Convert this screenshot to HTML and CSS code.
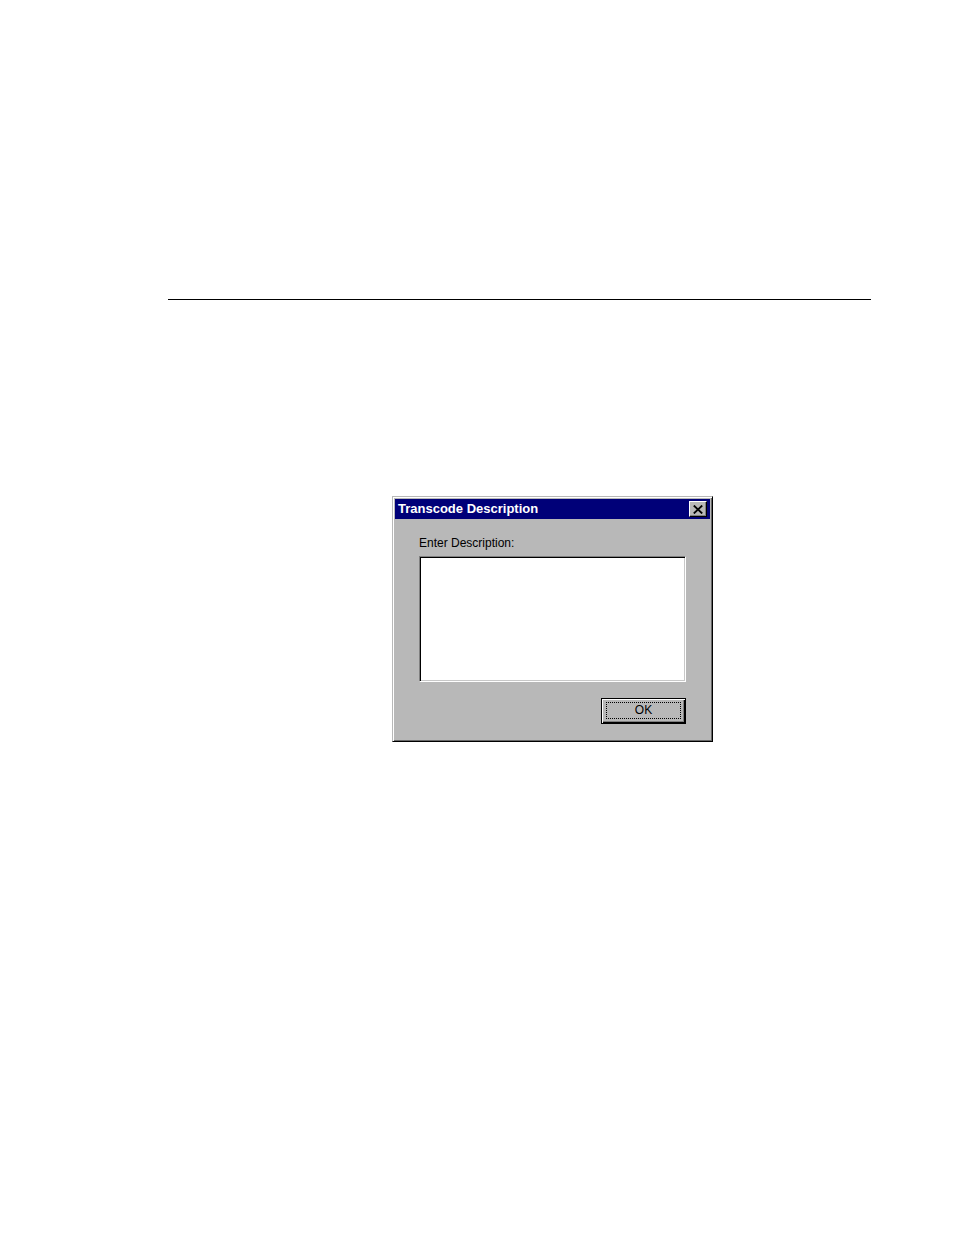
FILE: index.html
```
<!DOCTYPE html>
<html lang="en">
<head>
    <meta charset="UTF-8">
    <meta name="viewport" content="width=device-width, initial-scale=1.0">
    <title>Transcode Description</title>
    <link rel="stylesheet" href="styles.css">
</head>
<body>
    <main class="page">
        <hr class="rule">

        <form class="dialog">
            <div class="title-bar">
                <h1>Transcode Description</h1>
                <button type="button" class="close" aria-label="Close">
                    <svg width="10" height="9" viewBox="0 0 10 9" aria-hidden="true">
                        <path d="M0.8 0.5 L9.2 8.5 M9.2 0.5 L0.8 8.5" stroke="#000" stroke-width="1.8" fill="none"/>
                    </svg>
                </button>
            </div>

            <div class="dialog-body">
                <label for="description">Enter Description:</label>
                <textarea id="description" name="description"></textarea>
                <button type="submit" class="ok"><span>OK</span></button>
            </div>
        </form>
    </main>
</body>
</html>
```
FILE: styles.css
```
* {
    box-sizing: border-box;
}

body {
    margin: 0;
    background: #ffffff;
    font-family: "Liberation Sans", Arial, sans-serif;
    font-size: 12px;
    color: #000000;
}

.page {
    padding: 299px 83px 40px 168px;
}

.rule {
    margin: 0;
    border: 0;
    border-top: 1px solid #000000;
}

/* Raised window frame */
.dialog {
    max-width: 321px;
    margin: 196px 0 0 224px;
    padding: 2px;
    background: #b8b8b8;
    border: 1px solid;
    border-color: #b8b8b8 #000000 #000000 #b8b8b8;
    box-shadow: inset 1px 1px #ffffff, inset -1px -1px #686868;
}

.title-bar {
    display: flex;
    align-items: center;
    justify-content: space-between;
    height: 20px;
    padding: 0 3px;
    background: #000078;
}

.title-bar h1 {
    margin: 0;
    font-size: 13px;
    line-height: 20px;
    color: #ffffff;
}

.close {
    display: flex;
    align-items: center;
    justify-content: center;
    width: 18px;
    height: 16px;
    padding: 0;
    background: #b8b8b8;
    border: 1px solid;
    border-color: #ffffff #000000 #000000 #ffffff;
    box-shadow: inset -1px -1px #808080;
}

.dialog-body {
    display: flex;
    flex-direction: column;
    padding: 16px 24px 15px;
}

label {
    line-height: 16px;
    margin-bottom: 5px;
}

/* Sunken text box */
textarea {
    height: 126px;
    padding: 2px;
    font: inherit;
    resize: none;
    outline: none;
    background: #ffffff;
    border: 1px solid;
    border-color: #808080 #ffffff #ffffff #808080;
    border-radius: 0;
    box-shadow: inset 1px 1px #000000, inset -1px -1px #c8c8c8;
}

.ok {
    align-self: flex-end;
    width: 85px;
    height: 26px;
    margin-top: 16px;
    padding: 3px 4px 4px;
    font: inherit;
    background: #b8b8b8;
    border: 1px solid #000000;
    box-shadow: inset 1px 1px #ffffff, inset -1px -1px #000000, inset -2px -2px #808080;
}

/* Focus ring */
.ok span {
    display: block;
    border: 1px dotted #000000;
    line-height: 15px;
}
```
